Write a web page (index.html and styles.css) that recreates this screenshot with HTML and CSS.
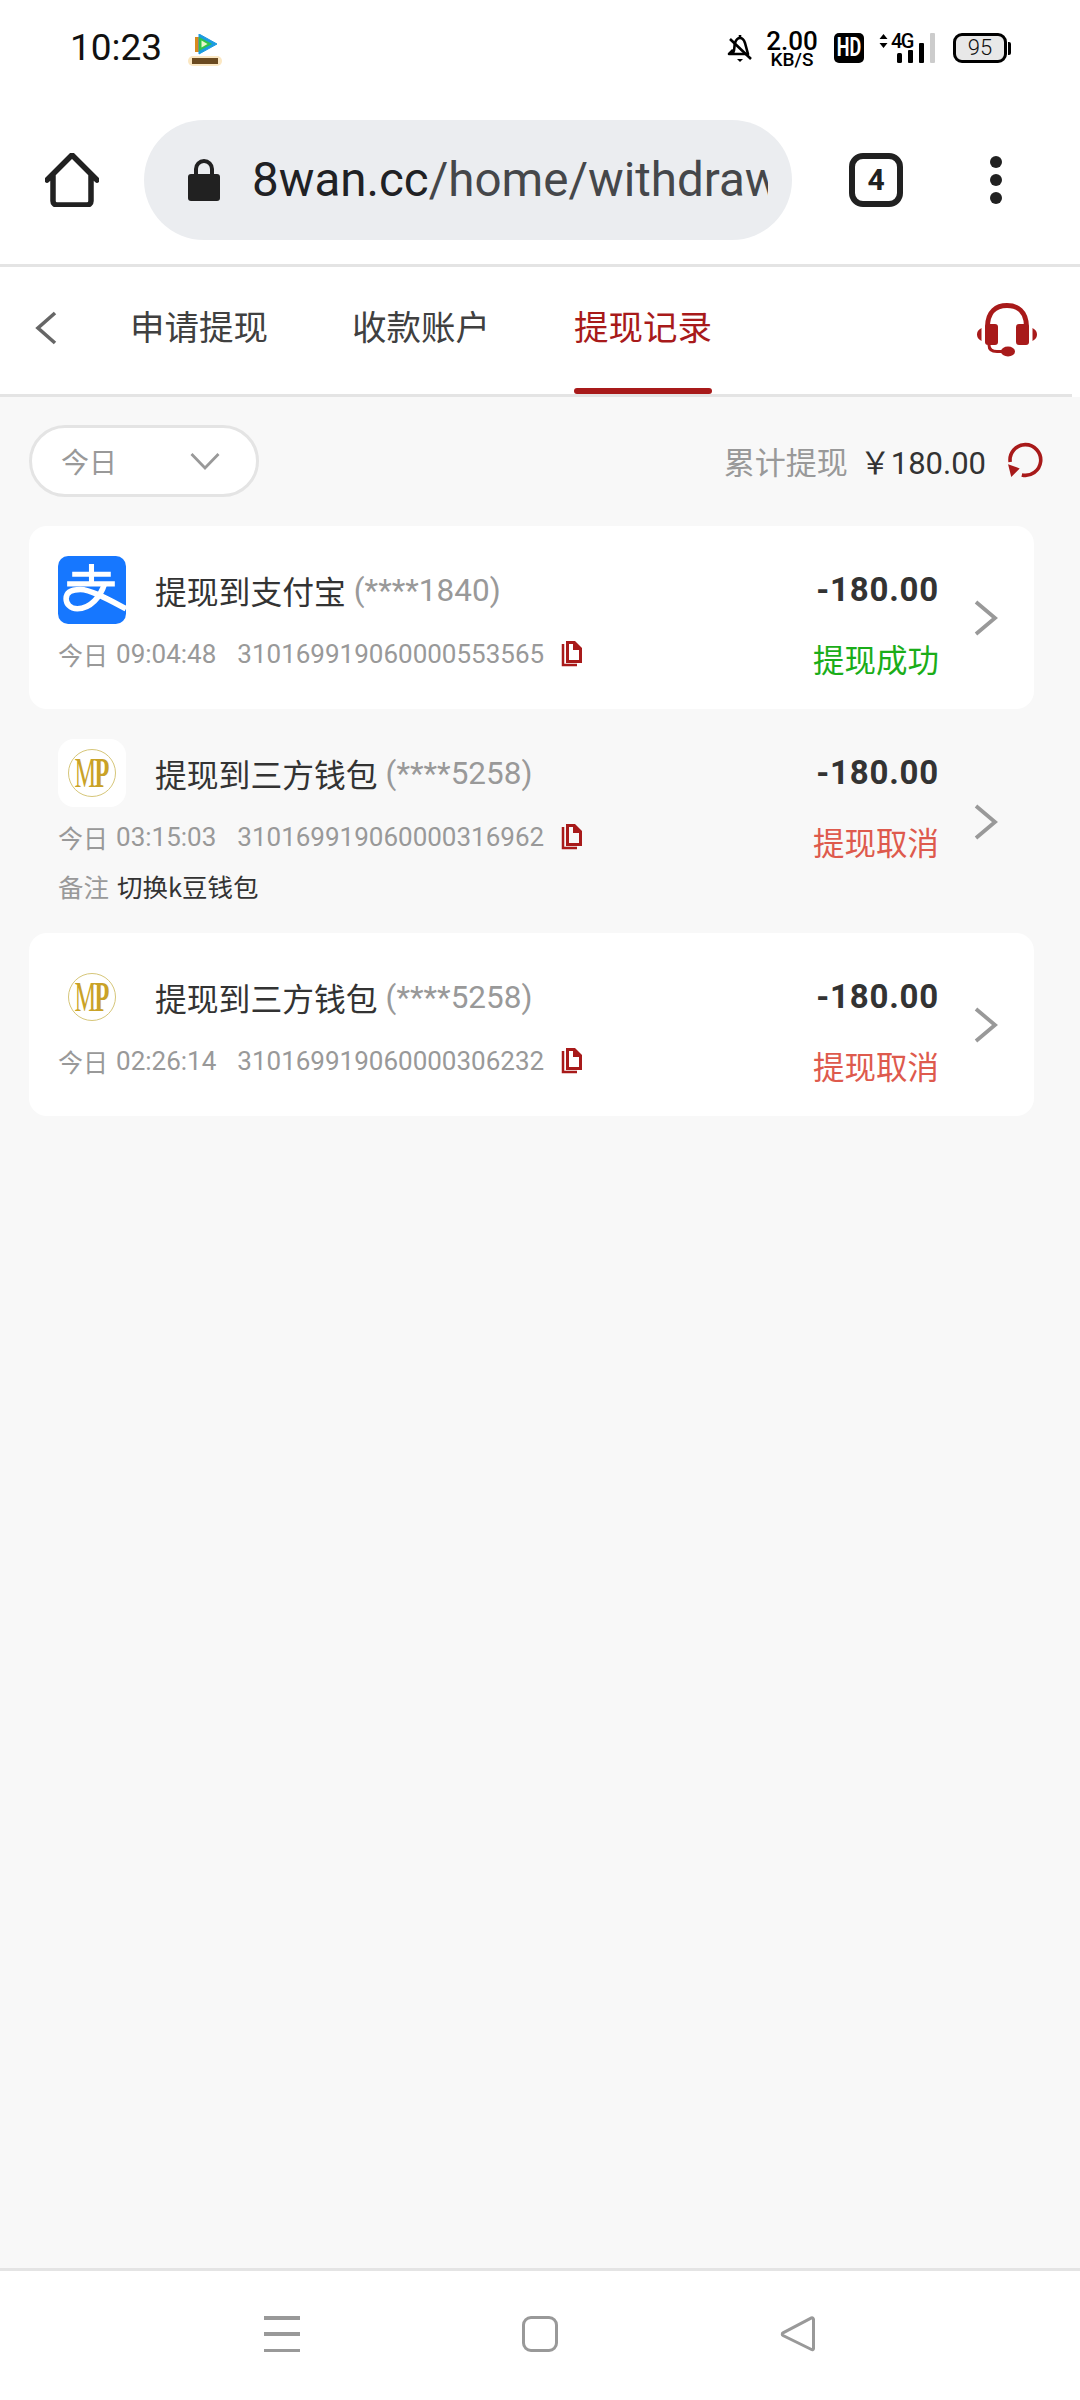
FILE: index.html
```html
<!DOCTYPE html>
<html lang="zh-CN">
<head>
<meta charset="utf-8">
<title>提现记录</title>
<link rel="stylesheet" href="styles.css">
</head>
<body>
<div class="page">
  <header class="status">
    <div class="status-left">
      <span class="clock">10:23</span>
      <svg class="app-badge" viewBox="0 0 34 32"><path d="M7 3h6v15H7z" fill="#d98a1e"/><path d="M11 0l18 10-18 10z" fill="#1b9be0" stroke="#1b9be0" stroke-linejoin="round"/><path d="M11 3l13 7-13 7z" fill="#2fc44a"/><path d="M13.500 6.500l6 3.500-6 3.500z" fill="#e8f7c8"/><rect x="0" y="22" width="34" height="10" rx="5" fill="#fbe7c2"/><rect x="4" y="24" width="26" height="6" fill="#6b4a20"/></svg>
    </div>
    <div class="status-right">
      <svg class="bell" viewBox="0 0 26 30"><path d="M13 2v3M6 20c2-3 1-7 2-10 1-3 3-5 5-5s4 2 5 5l3 11H2l4-4" fill="none" stroke="#000" stroke-width="2.600" stroke-linejoin="round"/><path d="M3 6l21 20" stroke="#000" stroke-width="2.600"/><path d="M10 26h6l-3 3z" fill="#000"/></svg>
      <div class="speed"><span class="speed-num">2.00</span><span class="speed-unit">KB/S</span></div>
      <span class="hd"><span class="hd-text">HD</span></span>
      <div class="net">
        <svg class="net-arrows" viewBox="0 0 9 14"><path d="M4.500 0l4 5h-8zM4.500 14l4-5h-8z" fill="#000"/></svg>
        <span class="net-label">4G</span>
        <svg class="net-bars" viewBox="0 0 38 30"><rect x="0" y="20" width="5" height="10" rx="1.500" fill="#000"/><rect x="11" y="17" width="5" height="13" rx="1" fill="#000"/><rect x="22" y="10" width="5" height="20" rx="1" fill="#000"/><rect x="33" y="0" width="5" height="30" rx="1" fill="#ccc"/></svg>
      </div>
      <div class="battery"><span class="battery-body">95</span><span class="battery-tip"></span></div>
    </div>
  </header>

  <div class="toolbar">
    <svg class="home-icon" viewBox="0 0 54 54"><path d="M2 27L27 2l25 25M8 22v26a4 4 0 0 0 4 4h30a4 4 0 0 0 4-4V22" fill="none" stroke="#212121" stroke-width="5.500" stroke-linecap="round" stroke-linejoin="round"/></svg>
    <div class="url-pill">
      <svg class="lock" viewBox="0 0 32 42"><path d="M8 17V10a8 8 0 0 1 16 0v7" fill="none" stroke="#212121" stroke-width="4"/><rect y="15" width="32" height="27" rx="3" fill="#212121"/></svg>
      <div class="url"><span class="url-host">8wan.cc</span>/home/withdraw</div>
    </div>
    <span class="tab-count">4</span>
    <div class="dots"><i></i><i></i><i></i></div>
  </div>

  <nav class="tabs">
    <svg class="back" viewBox="0 0 22 34"><path d="M20 2L3 17l17 15" fill="none" stroke="#666" stroke-width="3.600"/></svg>
    <a class="tab">申请提现</a>
    <a class="tab">收款账户</a>
    <a class="tab tab-active">提现记录</a>
    <svg class="headset" viewBox="0 0 60 54"><path d="M10.500 24C10.500 8 20 2.500 30 2.500S49.500 8 49.500 24" fill="none" stroke="#a81a1a" stroke-width="5"/><rect x="8" y="21" width="13" height="21" rx="3" fill="#a81a1a"/><rect x="39" y="21" width="13" height="21" rx="3" fill="#a81a1a"/><path d="M4.500 25v13C1 36 0 34 0 31.500S1 27 4.500 25zM55.500 25v13c3.500-2 4.500-4 4.500-6.500S59 27 55.500 25z" fill="#a81a1a"/><path d="M12 42c0 5 3 6.500 8 6.500h10" fill="none" stroke="#a81a1a" stroke-width="3"/><ellipse cx="31" cy="48.500" rx="7" ry="5" fill="#a81a1a"/></svg>
  </nav>

  <main class="content">
    <div class="filter-row">
      <div class="filter">
        <span>今日</span>
        <svg class="filter-arrow" viewBox="0 0 30 18"><path d="M1.500 2L15 16 28.500 2" fill="none" stroke="#999" stroke-width="2.800"/></svg>
      </div>
      <div class="total">
        <span class="total-label">累计提现</span>
        <span class="total-value">￥180.00</span>
        <svg class="refresh" viewBox="0 0 34 34"><path d="M3 19A14.500 14.500 0 1 1 14 31.100" fill="none" stroke="#a81a1a" stroke-width="3.400"/><path d="M1 21l11 4-8 8z" fill="#a81a1a"/></svg>
      </div>
    </div>

    <section class="row row-card">
      <div class="row-main">
        <div class="row-head">
          <svg class="logo" viewBox="0 0 67 67"><rect width="67" height="67" rx="10" fill="#1677ff"/><path d="M14 18h38M9 27.500h47M33 8v19" fill="none" stroke="#fff" stroke-width="5"/><path d="M46 27C42 40 32 52 19 52 12 52 8 47 8 42 8 36 13 33 22 33 32 33 50 43 67 52" fill="none" stroke="#fff" stroke-width="5.500"/></svg>
          <span class="title">提现到支付宝</span><span class="acct">(****1840)</span>
        </div>
        <div class="meta">
          <span class="meta-day">今日</span><span class="meta-time">09:04:48</span><span class="meta-no">310169919060000553565</span>
          <svg class="copy" viewBox="0 0 23 27"><path d="M4 3v21h14" fill="none" stroke="#a81a1a" stroke-width="2.500"/><path d="M7 0h9l7 7v15H7z" fill="#a81a1a"/><path d="M10 3h4v6h6v10H10z" fill="#fff"/></svg>
        </div>
      </div>
      <div class="row-side">
        <span class="amount">-180.00</span>
        <span class="state state-ok">提现成功</span>
      </div>
      <svg class="more" viewBox="0 0 24 36"><path d="M2 2l19 16L2 34" fill="none" stroke="#999" stroke-width="3.800"/></svg>
    </section>

    <section class="row row-tall">
      <div class="row-main">
        <div class="row-head">
          <div class="logo mp-logo"><span class="mp-mark"><span class="mp-text"><b class="mp-m">M</b><b class="mp-p">P</b></span></span></div>
          <span class="title">提现到三方钱包</span><span class="acct">(****5258)</span>
        </div>
        <div class="meta">
          <span class="meta-day">今日</span><span class="meta-time">03:15:03</span><span class="meta-no">310169919060000316962</span>
          <svg class="copy" viewBox="0 0 23 27"><path d="M4 3v21h14" fill="none" stroke="#a81a1a" stroke-width="2.500"/><path d="M7 0h9l7 7v15H7z" fill="#a81a1a"/><path d="M10 3h4v6h6v10H10z" fill="#f8f8f8"/></svg>
        </div>
        <div class="note"><span class="note-label">备注</span><span class="note-text">切换k豆钱包</span></div>
      </div>
      <div class="row-side">
        <span class="amount">-180.00</span>
        <span class="state state-cancel">提现取消</span>
      </div>
      <svg class="more" viewBox="0 0 24 36"><path d="M2 2l19 16L2 34" fill="none" stroke="#999" stroke-width="3.800"/></svg>
    </section>

    <section class="row row-card">
      <div class="row-main">
        <div class="row-head">
          <div class="logo mp-logo"><span class="mp-mark"><span class="mp-text"><b class="mp-m">M</b><b class="mp-p">P</b></span></span></div>
          <span class="title">提现到三方钱包</span><span class="acct">(****5258)</span>
        </div>
        <div class="meta">
          <span class="meta-day">今日</span><span class="meta-time">02:26:14</span><span class="meta-no">310169919060000306232</span>
          <svg class="copy" viewBox="0 0 23 27"><path d="M4 3v21h14" fill="none" stroke="#a81a1a" stroke-width="2.500"/><path d="M7 0h9l7 7v15H7z" fill="#a81a1a"/><path d="M10 3h4v6h6v10H10z" fill="#fff"/></svg>
        </div>
      </div>
      <div class="row-side">
        <span class="amount">-180.00</span>
        <span class="state state-cancel">提现取消</span>
      </div>
      <svg class="more" viewBox="0 0 24 36"><path d="M2 2l19 16L2 34" fill="none" stroke="#999" stroke-width="3.800"/></svg>
    </section>
  </main>

  <footer class="sysnav">
    <div class="sys-menu"><i></i><i></i><i></i></div>
    <span class="sys-home"></span>
    <svg class="sys-back" viewBox="0 0 36 36"><path d="M33.500 3.500v29c0 1-1 1.500-2 1L3 19.500c-1-.6-1-2 0-2.600l28.500-15c1-.5 2 .6 2 1.600z" fill="none" stroke="#999" stroke-width="3"/></svg>
  </footer>
</div>
</body>
</html>
```
FILE: styles.css
```css
* { box-sizing: border-box; }
html, body { margin: 0; padding: 0; }
body { font-family: Roboto, "Noto Sans CJK SC", sans-serif; background: #fff; color: #333; }
.page { width: 1080px; height: 2400px; display: flex; flex-direction: column; overflow: hidden; }

.status { height: 120px; flex: none; display: flex; justify-content: space-between; padding: 30px 69px 0 70px; align-items: flex-start; }
.status-left { display: flex; align-items: center; height: 36px; }
.clock { font-size: 37px; line-height: 36px; color: #111; }
.app-badge { width: 34px; height: 32px; margin-left: 26px; margin-top: 3px; }
.status-right { display: flex; align-items: flex-start; padding-top: 1px; }
.bell { width: 26px; height: 30px; margin-top: 2px; }
.speed { width: 50px; margin: -1px 0 0 14px; display: flex; flex-direction: column; align-items: center; color: #000; }
.speed-num { font-size: 26px; line-height: 22px; font-weight: 500; }
.speed-unit { font-size: 19px; line-height: 15px; font-weight: 500; }
.hd { width: 30px; height: 30px; margin: 2px 0 0 17px; background: #000; color: #fff; border-radius: 5px; font: 700 25px/30px "Roboto", sans-serif; text-align: center; overflow: hidden; }
.hd-text { display: inline-block; transform: scaleX(.72); margin: 0 -4px; }
.net { position: relative; width: 56px; height: 30px; margin: 2px 0 0 15px; }
.net-arrows { position: absolute; left: 0; top: 1px; width: 9px; height: 14px; }
.net-label { position: absolute; left: 12px; top: -1px; font-size: 20px; line-height: 18px; font-weight: 500; letter-spacing: -1.500px; color: #000; }
.net-bars { position: absolute; left: 18px; top: 0; width: 38px; height: 30px; }
.battery { display: flex; align-items: center; margin: 2px 0 0 18px; }
.battery-body { width: 54px; height: 30px; border: 3px solid #000; border-radius: 9px; background: #e8e8e8; font-size: 22px; line-height: 24px; font-weight: 300; text-align: center; color: #111; }
.battery-tip { width: 3px; height: 13px; background: #000; border-radius: 0 2px 2px 0; margin-left: 1px; }

.toolbar { height: 147px; flex: none; display: flex; align-items: flex-start; padding: 0 78px 0 45px; border-bottom: 3px solid #e4e4e4; }
.home-icon { width: 54px; height: 54px; margin-top: 33px; }
.url-pill { width: 648px; height: 120px; flex: none; margin-left: 45px; border-radius: 60px; background: #ebedf0; display: flex; align-items: center; padding-left: 44px; }
.lock { width: 32px; height: 42px; flex: none; margin-top: -1px; }
.url { width: 516px; margin-left: 32px; overflow: hidden; white-space: nowrap; font-size: 47.500px; line-height: 60px; color: #45474a; }
.url-host { color: #202124; }
.tab-count { width: 54px; height: 54px; margin: 33px 0 0 57px; border: 6px solid #212121; border-radius: 14px; font: 700 30px/42px "Roboto", sans-serif; text-align: center; color: #212121; }
.dots { display: flex; flex-direction: column; gap: 6px; margin: 36px 0 0 87px; }
.dots i { width: 12px; height: 12px; border-radius: 50%; background: #212121; }

.tabs { flex: none; height: 130px; margin-right: 8px; background: #fff; border-bottom: 3px solid #e4e4e4; display: flex; align-items: flex-start; padding: 3px 34px 0 35px; }
.back { width: 22px; height: 34px; margin-top: 41px; flex: none; }
.tab { font-size: 34.500px; line-height: 46px; font-family: "Noto Sans CJK SC", sans-serif; color: #404040; margin: 32px 0 0 73px; height: 92px; white-space: nowrap; }
.tab + .tab { margin-left: 84px; }
.tab-active { color: #a81a1a; position: relative; }
.tab-active::after { content: ""; position: absolute; left: 0; right: 0; top: 86px; height: 6px; border-radius: 3px; background: #a81a1a; }
.headset { width: 62px; height: 54px; margin: 33px 0 0 auto; flex: none; }

.content { flex: 1; background: #f8f8f8; display: flex; flex-direction: column; }
.filter-row { height: 129px; flex: none; display: flex; justify-content: space-between; align-items: flex-start; padding: 28px 37px 0 29px; }
.filter { width: 230px; height: 72px; border: 3px solid #e4e4e4; border-radius: 36px; background: #fff; display: flex; align-items: center; padding: 0 36px 0 29px; justify-content: space-between; font-size: 28px; color: #999; font-family: "Noto Sans CJK SC", sans-serif; }
.filter-arrow { width: 30px; height: 18px; margin-top: -1px; }
.total { display: flex; align-items: center; height: 70px; }
.total-label { font-size: 31px; color: #999; font-family: "Noto Sans CJK SC", sans-serif; }
.total-value { font-size: 31px; color: #333; margin-left: 12px; }
.refresh { width: 36px; height: 36px; margin-left: 21px; }

.row { width: 1005px; margin-left: 29px; height: 183px; padding: 0 36px 0 29px; flex: none; display: flex; }
.row-tall { height: 224px; }
.row-card { background: #fff; border-radius: 18px; }
.row-main { flex: 1; min-width: 0; padding-top: 30px; }
.row-head { display: flex; align-items: center; height: 68px; }
.logo { width: 68px; height: 68px; flex: none; }
.mp-logo { background: #fff; border-radius: 16px; display: flex; align-items: center; justify-content: center; }
.mp-mark { width: 48px; height: 48px; border: 1px solid #d6c679; border-radius: 50%; display: flex; align-items: center; justify-content: center; overflow: hidden; }
.mp-text { display: block; flex: none; font-family: "Liberation Serif", serif; color: #c9a227; font-size: 42px; line-height: 1; white-space: nowrap; letter-spacing: -3px; transform: scaleX(.58); padding-right: 3px; }
.mp-m { font-weight: 400; }
.mp-p { font-weight: 700; }
.title { margin-left: 29px; font-size: 31.800px; font-family: "Noto Sans CJK SC", sans-serif; color: #333; white-space: nowrap; }
.acct { margin-left: 8px; font-size: 31.500px; color: #999; white-space: nowrap; }
.meta { display: flex; align-items: center; margin-top: 10px; height: 40px; font-size: 26px; color: #999; white-space: nowrap; }
.meta-day { font-family: "Noto Sans CJK SC", sans-serif; font-size: 25px; }
.meta-time { margin-left: 8px; }
.meta-no { margin-left: 21px; }
.copy { width: 23px; height: 27px; margin-left: 15px; }
.note { margin-top: 9px; height: 38px; display: flex; align-items: center; font-size: 25.500px; font-family: "Noto Sans CJK SC", sans-serif; }
.note-label { color: #999; }
.note-text { margin-left: 8px; color: #333; }
.row-side { flex: none; display: flex; flex-direction: column; align-items: flex-end; padding-top: 42px; }
.amount { font-size: 33px; line-height: 44px; font-weight: 700; color: #333; letter-spacing: .8px; }
.state { margin-top: 24px; font-size: 31.500px; line-height: 44px; font-family: "Noto Sans CJK SC", sans-serif; }
.state-ok { color: #1aad19; }
.state-cancel { color: #de5a4d; }
.more { width: 24px; height: 36px; flex: none; align-self: center; margin: 1px 0 0 35px; }

.sysnav { flex: none; height: 132px; background: #fff; border-top: 3px solid #e4e4e4; display: flex; align-items: flex-start; padding: 45px 0 0 264px; }
.sys-menu { width: 36px; height: 36px; display: flex; flex-direction: column; justify-content: space-between; }
.sys-menu i { height: 3.500px; background: #999; }
.sys-home { width: 36px; height: 36px; margin-left: 222px; border: 3px solid #999; border-radius: 9px; }
.sys-back { width: 36px; height: 36px; margin-left: 222px; }
```
